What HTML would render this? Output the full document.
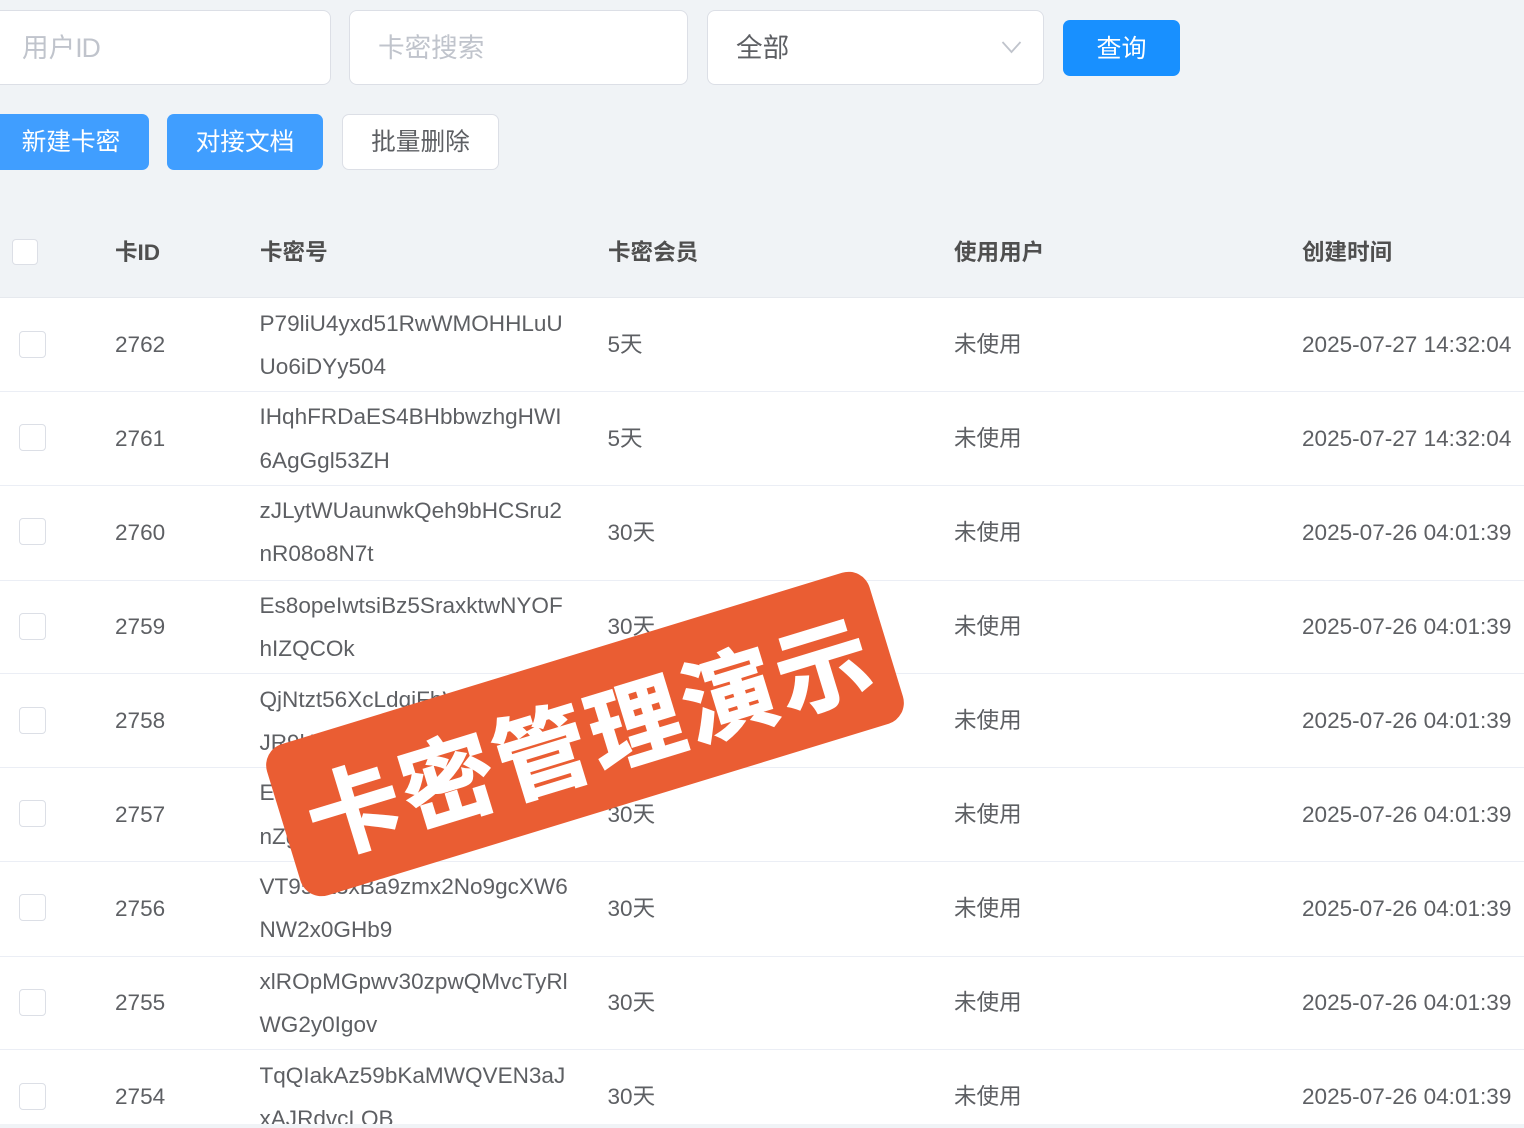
<!DOCTYPE html>
<html lang="zh-CN">
<head>
<meta charset="utf-8">
<title>卡密管理</title>
<style>
html,body{margin:0;padding:0;width:1524px;height:1128px;overflow:hidden;background:#f0f3f6;}
body{position:relative;font-family:"Liberation Sans","Noto Sans CJK SC",sans-serif;font-size:22.55px;color:#5d5f63;}
.a{position:absolute;box-sizing:border-box;}
.t{position:absolute;white-space:nowrap;line-height:30px;margin-top:1px;}
.c{margin-left:-.5px;}
.box{position:absolute;box-sizing:border-box;height:75px;top:10px;background:#fff;border:1.5px solid #dcdfe6;border-radius:8px;}
.btn{position:absolute;box-sizing:border-box;height:56px;border-radius:7px;text-align:center;line-height:58px;font-size:24.7px;}
.blue{background:#409eff;color:#fff;}
.row{position:absolute;left:0;width:1524px;height:94px;background:#fff;border-bottom:1.5px solid #ebeef5;box-sizing:border-box;}
.cb{position:absolute;left:19px;width:27px;height:27px;box-sizing:border-box;background:#fff;border:1.5px solid #dcdfe6;border-radius:4px;}
.th{position:absolute;top:238px;line-height:30px;font-weight:bold;color:#4f4f4f;font-size:22.55px;white-space:nowrap;}
.ph{color:#c0c4cc;font-size:26.6px;}
</style>
</head>
<body>

<div class="box" style="left:-20px;width:351px;"></div>
<div class="t ph" style="left:22px;top:32px;">用户<span style="letter-spacing:-1px;">ID</span></div>
<div class="box" style="left:349px;width:339px;"></div>
<div class="t ph" style="left:378px;top:32px;">卡密搜索</div>
<div class="box" style="left:707px;width:337px;"></div>
<div class="t" style="left:736px;top:32px;font-size:26.6px;">全部</div>
<svg class="a" style="left:1000px;top:38px;" width="24" height="18" viewBox="0 0 24 18"><path d="M2.500 4 L11.500 14 L20.500 4" fill="none" stroke="#c0c4cc" stroke-width="1.800"/></svg>
<div class="btn" style="left:1063px;top:20px;width:117px;background:#1890ff;color:#fff;font-size:25px;line-height:59px;">查询</div>

<div class="btn blue" style="left:-20px;top:114px;width:169px;padding-left:13px;">新建卡密</div>
<div class="btn blue" style="left:167px;top:114px;width:156px;">对接文档</div>
<div class="btn" style="left:342px;top:114px;width:157px;background:#fff;border:1.5px solid #dcdfe6;color:#5d5f63;line-height:55px;">批量删除</div>

<div class="a" style="left:12px;top:239px;width:26px;height:26px;background:#fff;border:1.5px solid #dcdfe6;border-radius:4px;"></div>
<div class="th" style="left:115px;">卡ID</div>
<div class="th" style="left:260px;">卡密号</div>
<div class="th" style="left:608px;">卡密会员</div>
<div class="th" style="left:954px;">使用用户</div>
<div class="th" style="left:1302px;">创建时间</div>
<div class="a" style="left:0;top:297px;width:1524px;height:1px;background:#e6e9ee;"></div>

<div class="row" style="top:298px;"></div>
<div class="row" style="top:392px;"></div>
<div class="row" style="top:486px;height:95px;"></div>
<div class="row" style="top:581px;height:93px;"></div>
<div class="row" style="top:674px;"></div>
<div class="row" style="top:768px;"></div>
<div class="row" style="top:862px;height:95px;"></div>
<div class="row" style="top:957px;height:93px;"></div>
<div class="row" style="top:1050px;height:74px;border-bottom:0;"></div>

<div class="cb" style="top:331px;"></div>
<div class="t" style="left:115px;top:329px;">2762</div>
<div class="t c" style="left:260px;top:308px;">P79liU4yxd51RwWMOHHLuU</div>
<div class="t c" style="left:260px;top:351px;">Uo6iDYy504</div>
<div class="t c" style="left:608px;top:329px;">5天</div>
<div class="t" style="left:954px;top:329px;">未使用</div>
<div class="t" style="left:1302px;top:329px;">2025-07-27 14:32:04</div>

<div class="cb" style="top:424px;"></div>
<div class="t" style="left:115px;top:423px;">2761</div>
<div class="t c" style="left:260px;top:401px;">IHqhFRDaES4BHbbwzhgHWI</div>
<div class="t c" style="left:260px;top:445px;">6AgGgl53ZH</div>
<div class="t c" style="left:608px;top:423px;">5天</div>
<div class="t" style="left:954px;top:423px;">未使用</div>
<div class="t" style="left:1302px;top:423px;">2025-07-27 14:32:04</div>

<div class="cb" style="top:518px;"></div>
<div class="t" style="left:115px;top:517px;">2760</div>
<div class="t c" style="left:260px;top:495px;">zJLytWUaunwkQeh9bHCSru2</div>
<div class="t c" style="left:260px;top:538px;">nR08o8N7t</div>
<div class="t c" style="left:608px;top:517px;">30天</div>
<div class="t" style="left:954px;top:517px;">未使用</div>
<div class="t" style="left:1302px;top:517px;">2025-07-26 04:01:39</div>

<div class="cb" style="top:613px;"></div>
<div class="t" style="left:115px;top:611px;">2759</div>
<div class="t c" style="left:260px;top:590px;">Es8opeIwtsiBz5SraxktwNYOF</div>
<div class="t c" style="left:260px;top:633px;">hIZQCOk</div>
<div class="t c" style="left:608px;top:611px;">30天</div>
<div class="t" style="left:954px;top:611px;">未使用</div>
<div class="t" style="left:1302px;top:611px;">2025-07-26 04:01:39</div>

<div class="cb" style="top:707px;"></div>
<div class="t" style="left:115px;top:705px;">2758</div>
<div class="t c" style="left:260px;top:684px;">QjNtzt56XcLdgiFbVaKm</div>
<div class="t c" style="left:260px;top:727px;">JR9kT2</div>
<div class="t c" style="left:608px;top:705px;">30天</div>
<div class="t" style="left:954px;top:705px;">未使用</div>
<div class="t" style="left:1302px;top:705px;">2025-07-26 04:01:39</div>

<div class="cb" style="top:800px;"></div>
<div class="t" style="left:115px;top:799px;">2757</div>
<div class="t c" style="left:260px;top:777px;">E8sKq</div>
<div class="t c" style="left:260px;top:821px;">nZg4</div>
<div class="t c" style="left:608px;top:799px;">30天</div>
<div class="t" style="left:954px;top:799px;">未使用</div>
<div class="t" style="left:1302px;top:799px;">2025-07-26 04:01:39</div>

<div class="cb" style="top:894px;"></div>
<div class="t" style="left:115px;top:893px;">2756</div>
<div class="t c" style="left:260px;top:871px;">VT95Nt3xBa9zmx2No9gcXW6</div>
<div class="t c" style="left:260px;top:914px;">NW2x0GHb9</div>
<div class="t c" style="left:608px;top:893px;">30天</div>
<div class="t" style="left:954px;top:893px;">未使用</div>
<div class="t" style="left:1302px;top:893px;">2025-07-26 04:01:39</div>

<div class="cb" style="top:989px;"></div>
<div class="t" style="left:115px;top:987px;">2755</div>
<div class="t c" style="left:260px;top:966px;">xlROpMGpwv30zpwQMvcTyRl</div>
<div class="t c" style="left:260px;top:1009px;">WG2y0Igov</div>
<div class="t c" style="left:608px;top:987px;">30天</div>
<div class="t" style="left:954px;top:987px;">未使用</div>
<div class="t" style="left:1302px;top:987px;">2025-07-26 04:01:39</div>

<div class="cb" style="top:1083px;"></div>
<div class="t" style="left:115px;top:1081px;">2754</div>
<div class="t c" style="left:260px;top:1060px;">TqQIakAz59bKaMWQVEN3aJ</div>
<div class="t c" style="left:260px;top:1103px;">xAJRdvcLQB</div>
<div class="t c" style="left:608px;top:1081px;">30天</div>
<div class="t" style="left:954px;top:1081px;">未使用</div>
<div class="t" style="left:1302px;top:1081px;">2025-07-26 04:01:39</div>

<div class="a" style="left:0;top:1124px;width:1524px;height:4px;background:#f0f3f6;"></div>

<div class="a" style="left:270px;top:655px;width:630px;height:158px;background:#ea5d33;border-radius:22px;transform:rotate(-17deg);color:#fff;font-family:'Noto Sans CJK SC','Liberation Sans',sans-serif;font-weight:700;font-size:94px;line-height:158px;text-align:center;padding-left:8px;letter-spacing:4px;white-space:nowrap;-webkit-text-stroke:1.500px #fff;">卡密管理演示</div>

</body>
</html>
